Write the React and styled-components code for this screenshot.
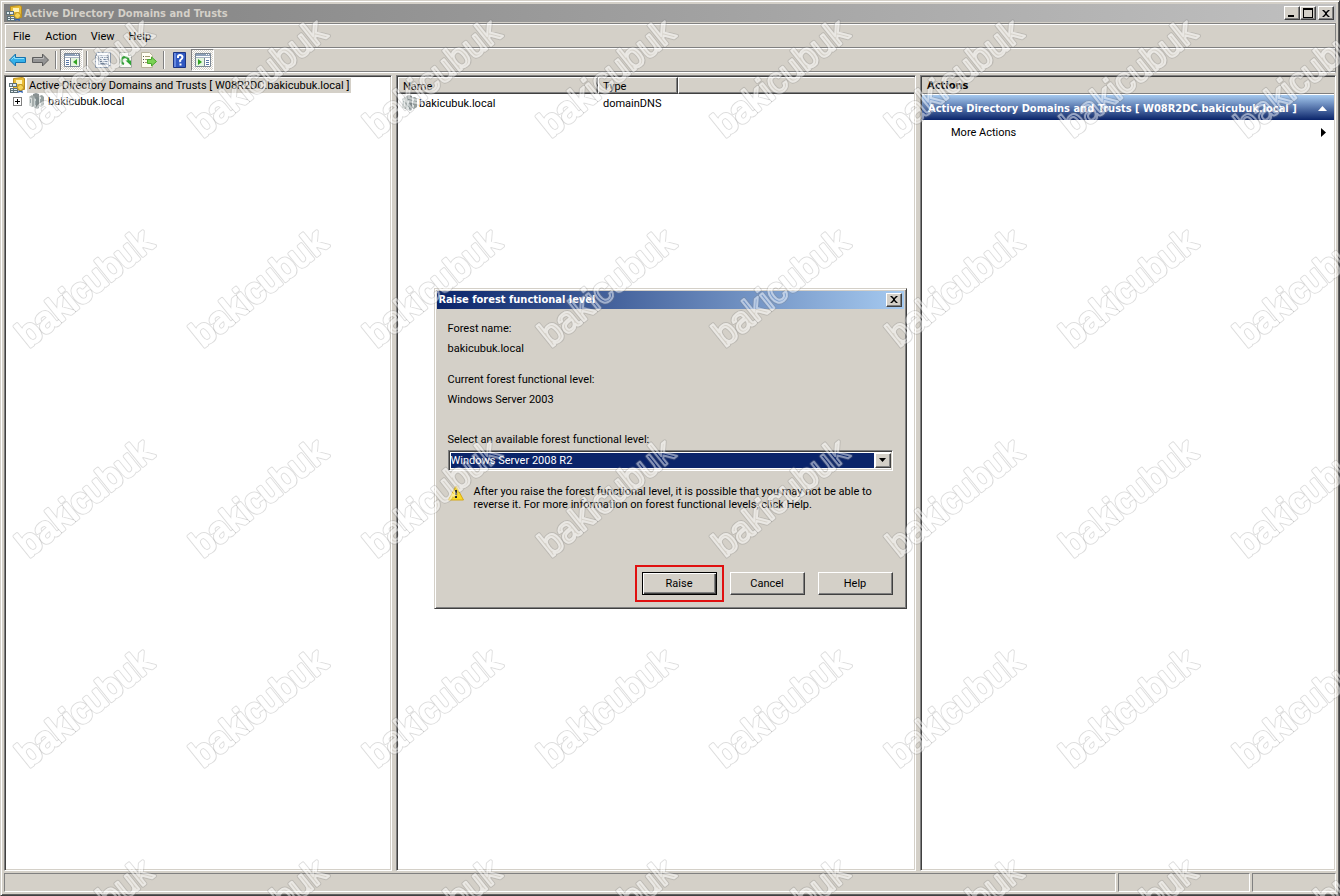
import React, { useState } from "react";
import styled, { createGlobalStyle, css } from "styled-components";

export default function App() {
  const [level, setLevel] = useState("2008r2");

  return (
    <>
      <GlobalStyle />
      <Window>
        <TitleBar>
          <ConsoleIcon />
          <h1>Active Directory Domains and Trusts</h1>
          <CaptionButtons>
            <CaptionButton aria-label="Minimize">
              <svg width="12" height="10">
                <path d="M2 7h6v2H2z" />
              </svg>
            </CaptionButton>
            <CaptionButton aria-label="Maximize">
              <svg width="12" height="10">
                <path d="M1 0h10v10H1zM2 2v7h8V2z" fillRule="evenodd" />
              </svg>
            </CaptionButton>
            <CaptionButton aria-label="Close" $apart>
              <CloseGlyph />
            </CaptionButton>
          </CaptionButtons>
        </TitleBar>

        <Bars>
          <MenuBar>
            <MenuButton>File</MenuButton>
            <MenuButton>Action</MenuButton>
            <MenuButton>View</MenuButton>
            <MenuButton>Help</MenuButton>
          </MenuBar>
          <Toolbar>
            <ToolButton aria-label="Back">
              <ArrowIcon />
            </ToolButton>
            <ToolButton aria-label="Forward">
              <ArrowIcon forward />
            </ToolButton>
            <Separator />
            <ToolButton aria-label="Show/Hide Console Tree" $pressed>
              <PaneIcon />
            </ToolButton>
            <Separator />
            <ToolButton aria-label="Properties">
              <PropertiesIcon />
            </ToolButton>
            <ToolButton aria-label="Refresh">
              <RefreshIcon />
            </ToolButton>
            <ToolButton aria-label="Export List">
              <ExportIcon />
            </ToolButton>
            <Separator />
            <ToolButton aria-label="Help">
              <HelpIcon />
            </ToolButton>
            <ToolButton aria-label="Show/Hide Action Pane" $pressed>
              <PaneIcon right />
            </ToolButton>
          </Toolbar>
        </Bars>

        <Panes>
          <Pane>
            <TreeRow>
              <ConsoleIcon />
              <TreeLabel $selected>
                Active Directory Domains and Trusts [ W08R2DC.bakicubuk.local ]
              </TreeLabel>
            </TreeRow>
            <TreeRow $child>
              <Expander aria-label="Expand bakicubuk.local">
                <svg width="7" height="7">
                  <path d="M1 3h5v1H1zM3 1h1v5H3z" />
                </svg>
              </Expander>
              <DomainIcon />
              <TreeLabel>bakicubuk.local</TreeLabel>
            </TreeRow>
          </Pane>

          <Pane>
            <ListTable>
              <colgroup>
                <col width="200" />
                <col width="80" />
                <col />
              </colgroup>
              <thead>
                <tr>
                  <th>Name</th>
                  <th>Type</th>
                  <th aria-label="Description" />
                </tr>
              </thead>
              <tbody>
                <tr>
                  <td>
                    <NameCell>
                      <DomainIcon />
                      bakicubuk.local
                    </NameCell>
                  </td>
                  <td>domainDNS</td>
                  <td />
                </tr>
              </tbody>
            </ListTable>
          </Pane>

          <Pane>
            <ActionsTitle>Actions</ActionsTitle>
            <ActionsGroup>
              Active Directory Domains and Trusts [ W08R2DC.bakicubuk.local ]
              <svg width="9" height="5">
                <path d="M0 5L4.500 0L9 5z" fill="#fff" />
              </svg>
            </ActionsGroup>
            <ActionItem>
              More Actions
              <svg width="5" height="9">
                <path d="M0 0L5 4.500L0 9z" />
              </svg>
            </ActionItem>
          </Pane>
        </Panes>

        <StatusBar>
          <StatusCell />
          <StatusCell />
          <StatusCell />
        </StatusBar>
      </Window>

      <Overlay>
        <Dialog role="dialog" aria-labelledby="dialog-title">
          <DialogTitle>
            <h2 id="dialog-title">Raise forest functional level</h2>
            <CaptionButton aria-label="Close dialog">
              <CloseGlyph />
            </CaptionButton>
          </DialogTitle>
          <DialogBody>
            <Field>
              <span>Forest name:</span>
              <span>bakicubuk.local</span>
            </Field>
            <Field>
              <span>Current forest functional level:</span>
              <span>Windows Server 2003</span>
            </Field>
            <SelectLabel htmlFor="level">
              Select an available forest functional level:
            </SelectLabel>
            <SelectBox>
              <select
                id="level"
                value={level}
                onChange={(e) => setLevel(e.target.value)}
              >
                <option value="2008">Windows Server 2008</option>
                <option value="2008r2">Windows Server 2008 R2</option>
              </select>
              <SelectArrow>
                <svg width="7" height="4">
                  <path d="M0 0h7L3.500 4z" />
                </svg>
              </SelectArrow>
            </SelectBox>
            <Warning>
              <WarningIcon />
              <p>
                After you raise the forest functional level, it is possible that you may not be able to
                <br />
                reverse it. For more information on forest functional levels, click Help.
              </p>
            </Warning>
            <DialogButtons>
              <PushButton $primary>Raise</PushButton>
              <PushButton>Cancel</PushButton>
              <PushButton>Help</PushButton>
            </DialogButtons>
          </DialogBody>
        </Dialog>
      </Overlay>

      <Watermark aria-hidden="true">
        <defs>
          {/* keeps the grey edge outside of the letters */}
          <mask id="outside" maskUnits="userSpaceOnUse" x="-10" y="-50" width="200" height="80">
            <rect x="-10" y="-50" width="200" height="80" fill="#fff" />
            <text className="cut">bakicubuk</text>
          </mask>
          <pattern id="mark" width="174" height="210" patternUnits="userSpaceOnUse">
            <g transform="translate(29 138) rotate(-39)">
              <text className="edge" mask="url(#outside)">bakicubuk</text>
              <text className="core">bakicubuk</text>
            </g>
          </pattern>
        </defs>
        <rect width="100%" height="100%" fill="url(#mark)" />
      </Watermark>
    </>
  );
}

/* ---------- icons ---------- */

function ConsoleIcon() {
  return (
    <svg width="16" height="16" viewBox="0 0 16 16">
      <path d="M4.500 1.500l9-1 2 1v11h-11z" fill="#e9bd35" stroke="#b98d1f" />
      <path d="M7 3h6v4H7z" fill="#fff3b8" />
      <path d="M0 6h8v4H0zM1 11h8v5H1z" fill="#5f7278" />
      <path d="M1 7h2v2H1zM4 7h3v2H4zM2 12h2v1H2zM5 12h3v1H5zM2 14h2v1H2zM5 14h3v1H5z" fill="#dfeaf0" />
      <path d="M10 12l-1 4 2-1 3 1-1-4z" fill="#2c5dac" />
      <circle cx="11.500" cy="10.500" r="3" fill="#f5d354" stroke="#b98d1f" />
    </svg>
  );
}

function DomainIcon() {
  return (
    <svg width="16" height="16" viewBox="0 0 16 16">
      <path d="M5 1l3-1 3 1v8H5z" fill="#8a9292" />
      <path d="M1 4l3-2 3 2v9l-3 1-3-2z" fill="#a4acab" />
      <path d="M1 4l3 1v9l-3-2z" fill="#d8dddb" />
      <path d="M6 5l3-1 2 1v10l-2 1-3-2z" fill="#7f8a8b" />
      <path d="M6 5l2 1v9l-2-1z" fill="#c8d0cf" />
      <path d="M11 3l3-1 2 2v8l-3 2-2-1z" fill="#96a09f" />
      <path d="M11 3l2 1v9l-2-1z" fill="#dde2e0" />
      <path d="M2.500 6v4M7.500 8v4M12.500 6v4" stroke="#9aa6a8" />
    </svg>
  );
}

function ArrowIcon({ forward }) {
  return (
    <svg width="17" height="14" viewBox="0 0 17 14">
      <path
        d={
          forward
            ? "M16.500 7l-6-6v3.500H.5v5h10V13z"
            : "M.5 7l6-6v3.500h10v5h-10V13z"
        }
        fill={forward ? "#949494" : "#35b1ea"}
        stroke={forward ? "#5d5d5d" : "#1672ad"}
      />
      <path
        d={forward ? "M2 5.500h9.500V3.500" : "M2.500 6.500L5.500 3.500v2H15"}
        fill="none"
        stroke={forward ? "#bdbdbd" : "#91e1fb"}
      />
    </svg>
  );
}

function PaneIcon({ right }) {
  return (
    <svg width="16" height="14" viewBox="0 0 16 14">
      <path d="M.5.5h15v13H.5z" fill="#fff" stroke="#7b8794" />
      <path d="M1 1h14v2H1z" fill="#8da0b8" />
      <path d="M1 4h14v1H1z" fill="#a8b4c4" />
      <path d="M11 1h1v1h-1zM13 1h1v1h-1z" fill="#fff" />
      {right ? (
        <>
          <path d="M9.500 5v9" stroke="#7b8794" />
          <path d="M11 7.500h3M11 9.500h3M11 11.500h3" stroke="#5675a5" />
          <path d="M1 5h8v8H1z" fill="#e5f5df" />
          <path d="M3 6l4 3-4 3z" fill="#32a321" />
        </>
      ) : (
        <>
          <path d="M6.500 5v9" stroke="#7b8794" />
          <path d="M2 7.500h3M2 9.500h3M2 11.500h3" stroke="#5675a5" />
          <path d="M7 5h8v8H7z" fill="#e5f5df" />
          <path d="M13 6L9 9l4 3z" fill="#32a321" />
        </>
      )}
    </svg>
  );
}

function PropertiesIcon() {
  return (
    <svg width="16" height="16" viewBox="0 0 16 16">
      <path d="M1.500.5h14v13h-2v2H.5v-12h1z" fill="#f8fafc" stroke="#8897aa" />
      <path d="M3.500 3.500h10v9h-10z" fill="#e6ecf4" stroke="#a5b1c1" />
      <path d="M5 5.500h3M5 7.500h2M8 7.500h5M5 9.500h2M8 9.500h5M9 5.500h4M5 11.500h7" stroke="#71849e" />
    </svg>
  );
}

function RefreshIcon() {
  return (
    <svg width="14" height="16" viewBox="0 0 14 16">
      <path d="M.5.5h9l3 3v12H.5z" fill="#fbfbf6" stroke="#a7aaa4" />
      <path d="M9.500.5v3h3" fill="#e5e5dd" stroke="#a7aaa4" />
      <path d="M5 12A3.500 3.500 0 1 1 9.500 9" fill="none" stroke="#2fa534" strokeWidth="2" />
      <path d="M6.500 8.500H12v5z" fill="#2fa534" />
    </svg>
  );
}

function ExportIcon() {
  return (
    <svg width="16" height="16" viewBox="0 0 16 16">
      <path d="M.5.5h8l3 3v12H.5z" fill="#fffdf0" stroke="#b9b39c" />
      <path d="M2 4.500h1M2 7.500h1M2 10.500h1" stroke="#555" />
      <path d="M4 4.500h5M4 7.500h3M4 10.500h3" stroke="#a39a70" />
      <path d="M6.500 7.500h4V5l5 4.500-5 4.500v-2.500h-4z" fill="#7bd254" stroke="#47a72b" />
    </svg>
  );
}

function HelpIcon() {
  return (
    <svg width="13" height="16" viewBox="0 0 13 16">
      <path d="M.5.5h12v15H.5z" fill="#3159c2" stroke="#1c3584" />
      <path d="M1 1h2v14H1z" fill="#6789df" />
      <path
        d="M5 6V4.500Q5 3 7 3t2.500 2Q9.500 6.500 8 7.500T7.500 10M7.500 11.500v2"
        fill="none"
        stroke="#fff"
        strokeWidth="2"
      />
    </svg>
  );
}

function WarningIcon() {
  return (
    <svg width="16" height="16" viewBox="0 0 16 16">
      <path d="M8 1l7.500 14H.5z" fill="#fbd926" stroke="#d5a817" strokeLinejoin="round" />
      <path d="M7 5h2v5H7zM7 11h2v2H7z" fill="#1c1c1c" />
    </svg>
  );
}

function CloseGlyph() {
  return (
    <svg width="8" height="7">
      <path d="M0 0h2l2 2 2-2h2L5 3v1l3 3H6L4 5 2 7H0l3-3V3z" />
    </svg>
  );
}

/* ---------- styles ---------- */

const uiFont = `Roboto, "Liberation Sans", sans-serif`;
const boldFont = `"DejaVu Sans Condensed", "DejaVu Sans", sans-serif`;

const raised = css`
  border: 1px solid;
  border-color: #fff #404040 #404040 #fff;
  box-shadow: inset -1px -1px #808080;
`;

const sunken = css`
  border: 1px solid;
  border-color: #808080 #fff #fff #808080;
  box-shadow: inset 1px 1px #404040, inset -1px -1px #d4d0c8;
`;

const GlobalStyle = createGlobalStyle`
  * {
    box-sizing: border-box;
  }

  body {
    margin: 0;
    background: #d4d0c8;
    color: #000;
    font-family: ${uiFont};
    font-size: 11px;
    line-height: 13px;
  }

  button,
  select {
    margin: 0;
    padding: 0;
    font: inherit;
    color: inherit;
  }

  h1,
  h2,
  p {
    margin: 0;
    font-size: 11px;
  }

  h1,
  h2 {
    font-family: ${boldFont};
  }

  svg {
    flex: none;
    display: block;
  }
`;

const Window = styled.div`
  display: flex;
  flex-direction: column;
  min-height: 100vh;
  padding: 3px;
  border: 1px solid;
  border-color: #d4d0c8 #404040 #404040 #d4d0c8;
  box-shadow: inset 1px 1px #fff, inset -1px -1px #606060;
`;

const TitleBar = styled.header`
  display: flex;
  align-items: center;
  height: 18px;
  padding: 0 2px;
  color: #d4d0c8;
  background: linear-gradient(to right, #808080, #c0c0c0);

  h1 {
    flex: 1;
    padding-left: 2px;
  }
`;

const CaptionButtons = styled.div`
  display: flex;
`;

const CaptionButton = styled.button`
  ${raised}
  display: flex;
  align-items: center;
  justify-content: center;
  width: 16px;
  height: 14px;
  margin-left: ${(props) => (props.$apart ? "2px" : "0")};
  background: #d4d0c8;
`;

const Bars = styled.div`
  margin-top: 1px;
  border: 1px solid;
  border-color: #808080 #808080 #fff #d4d0c8;
`;

const MenuBar = styled.nav`
  display: flex;
  align-items: center;
  height: 24px;
  padding-left: 2px;
  border-top: 1px solid #fff;
  border-left: 1px solid #fff;
  border-bottom: 1px solid #808080;
`;

const MenuButton = styled.button`
  height: 20px;
  padding: 0 7px;
  border: none;
  background: transparent;

  &:first-child {
    padding: 0 8px 0 5px;
  }
`;

const Toolbar = styled.div`
  display: flex;
  align-items: center;
  height: 24px;
  border-top: 1px solid #fff;
  border-left: 1px solid #fff;
  border-bottom: 1px solid #808080;
`;

const ToolButton = styled.button`
  display: flex;
  align-items: center;
  justify-content: center;
  width: 23px;
  height: 22px;
  border: 1px solid transparent;
  background: transparent;

  ${(props) =>
    props.$pressed &&
    css`
      border-color: #808080 #fff #fff #808080;
      background: repeating-conic-gradient(#fff 0 25%, #d4d0c8 0 50%) 0 0 / 2px 2px;
    `}
`;

const Separator = styled.span`
  width: 2px;
  height: 18px;
  margin: 0 3px;
  border-left: 1px solid #808080;
  border-right: 1px solid #fff;
`;

const Panes = styled.main`
  flex: 1;
  display: grid;
  grid-template-columns: 388px 520px minmax(0, 1fr);
  gap: 4px;
  margin-top: 2px;
`;

const Pane = styled.section`
  ${sunken}
  min-width: 0;
  padding: 1px;
  background: #fff;
`;

const TreeRow = styled.div`
  display: flex;
  align-items: center;
  height: 16px;
  padding-left: ${(props) => (props.$child ? "7px" : "3px")};
`;

const TreeLabel = styled.span`
  margin-left: 2px;
  padding: 1px 2px;
  white-space: nowrap;
  background: ${(props) => (props.$selected ? "#d4d0c8" : "transparent")};
`;

const Expander = styled.button`
  width: 9px;
  height: 9px;
  margin-right: 6px;
  border: 1px solid #808080;
  background: #fff;
`;

const ListTable = styled.table`
  width: 100%;
  table-layout: fixed;
  border-collapse: separate;
  border-spacing: 0;

  th {
    ${raised}
    height: 17px;
    padding: 1px 4px 0;
    font-weight: 400;
    text-align: left;
    background: #d4d0c8;
  }

  th:last-child {
    border-right: none;
    box-shadow: inset 0 -1px #808080;
  }

  td {
    height: 18px;
    padding: 0 5px;
  }

  td:first-child {
    padding: 0 3px;
  }
`;

const NameCell = styled.div`
  display: flex;
  align-items: center;
  gap: 2px;
`;

const ActionsTitle = styled.div`
  height: 17px;
  padding: 2px 5px;
  font-family: ${boldFont};
  font-weight: 700;
  background: #d4d0c8;
  border-bottom: 1px solid #808080;
`;

const ActionsGroup = styled.button`
  display: flex;
  align-items: center;
  justify-content: space-between;
  width: 100%;
  height: 25px;
  margin-top: 1px;
  padding: 2px 7px 0 6px;
  border: none;
  color: #fff;
  font-family: ${boldFont};
  font-weight: 700;
  white-space: nowrap;
  background: linear-gradient(#a6caf0, #0a246a);
`;

const ActionItem = styled.button`
  display: flex;
  align-items: center;
  justify-content: space-between;
  width: 100%;
  height: 25px;
  padding: 0 8px 0 29px;
  border: none;
  background: transparent;
`;

const StatusBar = styled.footer`
  display: grid;
  grid-template-columns: minmax(0, 1fr) 132px 84px;
  gap: 2px;
  height: 19px;
  margin-top: 2px;
`;

const StatusCell = styled.div`
  border: 1px solid;
  border-color: #808080 #fff #fff #808080;
`;

const Overlay = styled.div`
  position: fixed;
  inset: 0;
  display: flex;
  align-items: center;
  justify-content: center;
`;

const Dialog = styled.section`
  width: 473px;
  padding: 2px;
  border: 1px solid;
  border-color: #d4d0c8 #404040 #404040 #d4d0c8;
  box-shadow: inset 1px 1px #fff, inset -1px -1px #808080;
  background: #d4d0c8;
`;

const DialogTitle = styled.header`
  display: flex;
  align-items: center;
  justify-content: space-between;
  height: 18px;
  padding: 0 2px;
  color: #fff;
  background: linear-gradient(to right, #0a246a, #a6caf0);

  button {
    color: #000;
  }
`;

const DialogBody = styled.div`
  display: flex;
  flex-direction: column;
  padding: 13px 11px 11px;
`;

const Field = styled.div`
  display: flex;
  flex-direction: column;
  gap: 7px;
  margin-bottom: 18px;
`;

const SelectLabel = styled.label`
  margin-top: 9px;
`;

const SelectBox = styled.div`
  ${sunken}
  display: flex;
  height: 21px;
  margin-top: 4px;
  padding: 2px 1px 2px 2px;
  background: #fff;

  select {
    flex: 1;
    appearance: none;
    border: none;
    border-radius: 0;
    color: #fff;
    background: #0a246a;
    outline: none;
  }
`;

const SelectArrow = styled.span`
  ${raised}
  display: flex;
  align-items: center;
  justify-content: center;
  width: 16px;
  margin-left: 1px;
  background: #d4d0c8;
  pointer-events: none;
`;

const Warning = styled.div`
  display: flex;
  gap: 10px;
  margin-top: 14px;

  p {
    white-space: nowrap;
  }
`;

const DialogButtons = styled.div`
  display: flex;
  justify-content: flex-end;
  gap: 13px;
  margin-top: 61px;
`;

const PushButton = styled.button`
  ${raised}
  width: 75px;
  height: 23px;
  background: #d4d0c8;

  ${(props) =>
    props.$primary &&
    css`
      border-color: #000;
      box-shadow: inset 1px 1px #fff, inset -1px -1px #404040, inset -2px -2px #808080;
      outline: 2px solid #e01010;
      outline-offset: 5px;
    `}
`;

const Watermark = styled.svg`
  position: fixed;
  inset: 0;
  width: 100%;
  height: 100%;
  pointer-events: none;

  text {
    font-family: "Liberation Sans", Arial, sans-serif;
    font-size: 36px;
    fill: none;
    stroke-linejoin: round;
  }

  .cut {
    fill: #000;
    stroke: #000;
    stroke-width: 2px;
  }

  .edge {
    stroke: rgba(120, 120, 120, 0.25);
    stroke-width: 4px;
  }

  .core {
    stroke: rgba(255, 255, 255, 0.5);
    stroke-width: 2px;
  }
`;
